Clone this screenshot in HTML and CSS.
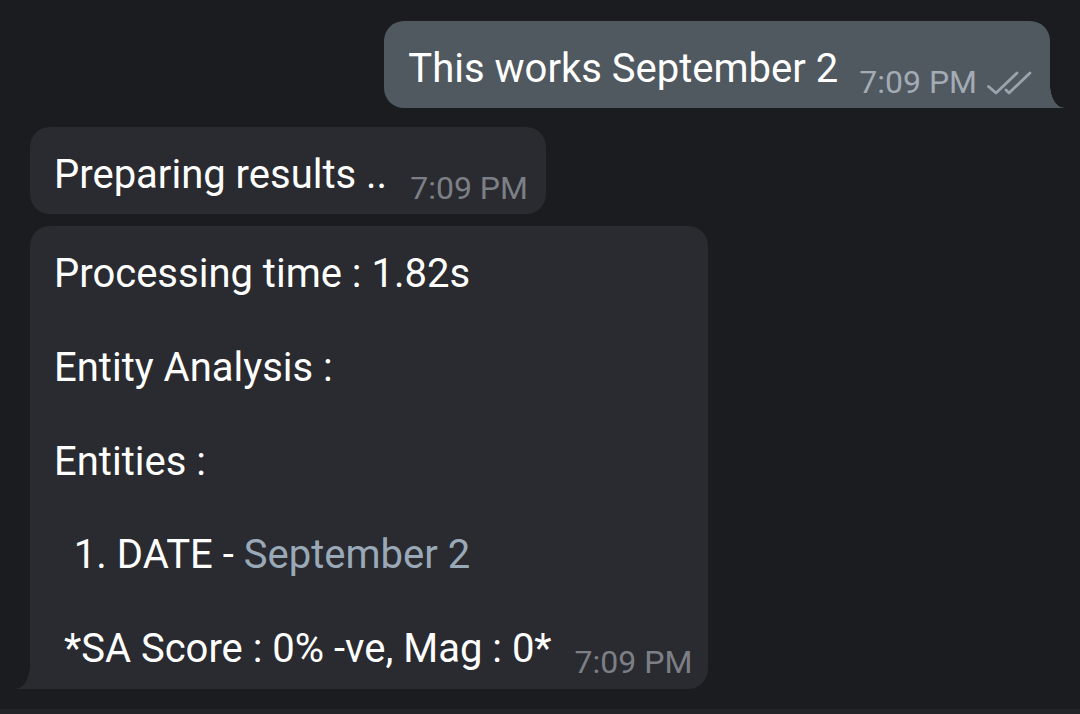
FILE: index.html
```html
<!DOCTYPE html>
<html>
<head>
<meta charset="utf-8">
<link rel="stylesheet" href="styles.css">
</head>
<body>
<div class="chat">
  <div class="bubble out tail-out"><span class="text">This works September 2</span><span class="meta">7:09 PM<svg class="checks" width="46" height="24" viewBox="0 0 46 24"><path d="M2.5 15.5 L10 22 L31 2" fill="none" stroke="#9ba4ae" stroke-width="2.8" stroke-linecap="round" stroke-linejoin="round"/><path d="M20 19 L23 22 L44 2" fill="none" stroke="#9ba4ae" stroke-width="2.8" stroke-linecap="round" stroke-linejoin="round"/></svg></span></div>
  <div class="bubble in first"><span class="text">Preparing results ..</span><span class="meta">7:09 PM</span></div>
  <div class="bubble in big tail-in">
    <div class="line">Processing time : 1.82s</div>
    <div class="line"></div>
    <div class="line">Entity Analysis :</div>
    <div class="line"></div>
    <div class="line">Entities :</div>
    <div class="line"></div>
    <div class="line">  1. DATE - <span class="link">September 2</span></div>
    <div class="line"></div>
    <div class="line"> *SA Score : 0% -ve, Mag : 0*<span class="meta">7:09 PM</span></div>
  </div>
</div>
<div class="bottombar"></div>
</body>
</html>
```
FILE: styles.css
```css
html, body {
  margin: 0;
  padding: 0;
  background: #1b1c1f;
  height: 714px;
  overflow: hidden;
  font-family: Roboto, "Noto Sans", sans-serif;
  color: #ffffff;
}
.chat {
  display: flex;
  flex-direction: column;
  align-items: flex-start;
  padding: 21px 30px 0 30px;
  height: 709px;
  box-sizing: border-box;
}
.bubble {
  position: relative;
  border-radius: 20px;
  font-size: 40px;
  line-height: 47px;
  white-space: nowrap;
}
.text {
  white-space: pre;
}
.out {
  align-self: flex-end;
  background: #505860;
  padding: 24px 18px 16px 24px;
  border-bottom-right-radius: 0;
}
.in {
  background: #2a2b30;
}
.first {
  margin-top: 19px;
  padding: 24px 18px 16px 24px;
}
.big {
  margin-top: 12px;
  padding: 24px 16px 17px 24px;
  border-bottom-left-radius: 0;
}
.meta {
  display: inline-block;
  font-size: 32px;
  line-height: 30px;
  color: #7c7f85;
  margin-left: 23px;
  position: relative;
  top: 11px;
  white-space: nowrap;
}
.out .meta {
  color: #a3abb4;
  margin-left: 21px;
}
.checks {
  vertical-align: -2px;
  margin-left: 9px;
}
.line {
  height: 46.875px;
  white-space: pre;
}
.link {
  color: #9aa9b7;
}
.tail-out::after {
  content: "";
  position: absolute;
  right: -14px;
  bottom: 0;
  width: 14px;
  height: 23px;
  background: radial-gradient(ellipse 14px 23px at 100% 0, transparent 97%, #505860 100%);
}
.tail-in::after {
  content: "";
  position: absolute;
  left: -14px;
  bottom: 0;
  width: 14px;
  height: 23px;
  background: radial-gradient(ellipse 14px 23px at 0 0, transparent 97%, #2a2b30 100%);
}
.bottombar {
  height: 5px;
  background: #232428;
}
```
